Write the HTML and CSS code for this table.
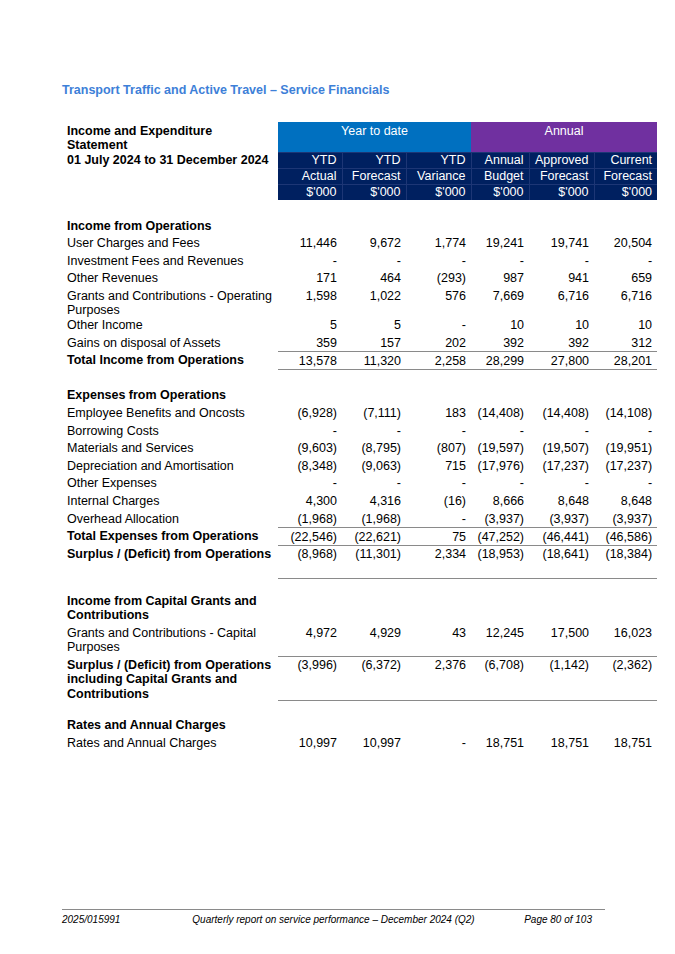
FILE: index.html
```html
<!DOCTYPE html>
<html lang="en">
<head>
<meta charset="utf-8">
<title>Transport Traffic and Active Travel – Service Financials</title>
<link rel="stylesheet" href="styles.css">
</head>
<body>
<div class="page">
  <h1 class="title">Transport Traffic and Active Travel – Service Financials</h1>

  <table class="fin">
    <colgroup>
      <col class="c-label">
      <col class="c-n1"><col class="c-n2"><col class="c-n3">
      <col class="c-n4"><col class="c-n5"><col class="c-n6">
    </colgroup>
    <thead>
      <tr class="h-group">
        <th class="lbl b">Income and Expenditure<br>Statement</th>
        <th class="grp ytd" colspan="3">Year to date</th>
        <th class="grp ann" colspan="3">Annual</th>
      </tr>
      <tr class="h-sub">
        <th class="lbl b">01 July 2024 to 31 December 2024</th>
        <th class="dk">YTD</th><th class="dk">YTD</th><th class="dk">YTD</th>
        <th class="dk">Annual</th><th class="dk">Approved</th><th class="dk">Current</th>
      </tr>
      <tr class="h-sub">
        <th class="lbl"></th>
        <th class="dk">Actual</th><th class="dk">Forecast</th><th class="dk">Variance</th>
        <th class="dk">Budget</th><th class="dk">Forecast</th><th class="dk">Forecast</th>
      </tr>
      <tr class="h-sub last">
        <th class="lbl"></th>
        <th class="dk">$'000</th><th class="dk">$'000</th><th class="dk">$'000</th>
        <th class="dk">$'000</th><th class="dk">$'000</th><th class="dk">$'000</th>
      </tr>
    </thead>
    <tbody>
      <tr class="blank"><td colspan="7"></td></tr>
      <tr><td class="lbl b" colspan="7">Income from Operations</td></tr>
      <tr><td class="lbl">User Charges and Fees</td><td>11,446</td><td>9,672</td><td>1,774</td><td>19,241</td><td>19,741</td><td>20,504</td></tr>
      <tr><td class="lbl">Investment Fees and Revenues</td><td>-</td><td>-</td><td>-</td><td>-</td><td>-</td><td>-</td></tr>
      <tr><td class="lbl">Other Revenues</td><td>171</td><td>464</td><td>(293)</td><td>987</td><td>941</td><td>659</td></tr>
      <tr class="tight"><td class="lbl">Grants and Contributions - Operating Purposes</td><td>1,598</td><td>1,022</td><td>576</td><td>7,669</td><td>6,716</td><td>6,716</td></tr>
      <tr><td class="lbl">Other Income</td><td>5</td><td>5</td><td>-</td><td>10</td><td>10</td><td>10</td></tr>
      <tr><td class="lbl">Gains on disposal of Assets</td><td>359</td><td>157</td><td>202</td><td>392</td><td>392</td><td>312</td></tr>
      <tr class="total both"><td class="lbl b">Total Income from Operations</td><td>13,578</td><td>11,320</td><td>2,258</td><td>28,299</td><td>27,800</td><td>28,201</td></tr>

      <tr class="blank"><td colspan="7"></td></tr>
      <tr><td class="lbl b" colspan="7">Expenses from Operations</td></tr>
      <tr><td class="lbl">Employee Benefits and Oncosts</td><td>(6,928)</td><td>(7,111)</td><td>183</td><td>(14,408)</td><td>(14,408)</td><td>(14,108)</td></tr>
      <tr><td class="lbl">Borrowing Costs</td><td>-</td><td>-</td><td>-</td><td>-</td><td>-</td><td>-</td></tr>
      <tr><td class="lbl">Materials and Services</td><td>(9,603)</td><td>(8,795)</td><td>(807)</td><td>(19,597)</td><td>(19,507)</td><td>(19,951)</td></tr>
      <tr><td class="lbl">Depreciation and Amortisation</td><td>(8,348)</td><td>(9,063)</td><td>715</td><td>(17,976)</td><td>(17,237)</td><td>(17,237)</td></tr>
      <tr><td class="lbl">Other Expenses</td><td>-</td><td>-</td><td>-</td><td>-</td><td>-</td><td>-</td></tr>
      <tr><td class="lbl">Internal Charges</td><td>4,300</td><td>4,316</td><td>(16)</td><td>8,666</td><td>8,648</td><td>8,648</td></tr>
      <tr><td class="lbl">Overhead Allocation</td><td>(1,968)</td><td>(1,968)</td><td>-</td><td>(3,937)</td><td>(3,937)</td><td>(3,937)</td></tr>
      <tr class="total top"><td class="lbl b">Total Expenses from Operations</td><td>(22,546)</td><td>(22,621)</td><td>75</td><td>(47,252)</td><td>(46,441)</td><td>(46,586)</td></tr>
      <tr class="total top"><td class="lbl b">Surplus / (Deficit) from Operations</td><td>(8,968)</td><td>(11,301)</td><td>2,334</td><td>(18,953)</td><td>(18,641)</td><td>(18,384)</td></tr>
      <tr class="spacer-a ruled"><td class="lbl"></td><td></td><td></td><td></td><td></td><td></td><td></td></tr>

      <tr class="spacer-b"><td colspan="7"></td></tr>
      <tr class="loose"><td class="lbl b" colspan="7">Income from Capital Grants and<br>Contributions</td></tr>
      <tr class="loose"><td class="lbl">Grants and Contributions - Capital<br>Purposes</td><td>4,972</td><td>4,929</td><td>43</td><td>12,245</td><td>17,500</td><td>16,023</td></tr>
      <tr class="total both"><td class="lbl b">Surplus / (Deficit) from Operations<br>including Capital Grants and<br>Contributions</td><td>(3,996)</td><td>(6,372)</td><td>2,376</td><td>(6,708)</td><td>(1,142)</td><td>(2,362)</td></tr>

      <tr class="spacer-c"><td colspan="7"></td></tr>
      <tr><td class="lbl b" colspan="7">Rates and Annual Charges</td></tr>
      <tr><td class="lbl">Rates and Annual Charges</td><td>10,997</td><td>10,997</td><td>-</td><td>18,751</td><td>18,751</td><td>18,751</td></tr>
    </tbody>
  </table>

  <footer class="foot">
    <span class="f-left">2025/015991</span>
    <span class="f-mid">Quarterly report on service performance – December 2024 (Q2)</span>
    <span class="f-right">Page 80 of 103</span>
  </footer>
</div>
</body>
</html>
```
FILE: styles.css
```css
* { box-sizing: border-box; }

html, body {
  margin: 0;
  padding: 0;
  background: #ffffff;
}

body {
  font-family: "Liberation Sans", Arial, sans-serif;
  color: #000000;
  font-size: 12.5px;
}

.page {
  width: 675px;
  min-height: 954px;
  padding: 83px 0 0 62px;
  display: flex;
  flex-direction: column;
}

.title {
  margin: 0 0 24px;
  font-size: 12.5px;
  line-height: 15px;
  font-weight: bold;
  color: #3d80d8;
}

.fin {
  border-collapse: collapse;
  table-layout: fixed;
  width: 595px;
}

.c-label { width: 216px; }
.c-n1 { width: 64px; }
.c-n2 { width: 64px; }
.c-n3 { width: 65px; }
.c-n4 { width: 58px; }
.c-n5 { width: 65px; }
.c-n6 { width: 63px; }

.fin th,
.fin td {
  padding: 1.5px 5px 0 0;
  line-height: 14.3px;
  vertical-align: top;
  text-align: right;
  font-weight: normal;
  white-space: nowrap;
}

.fin .lbl {
  text-align: left;
  padding-left: 5px;
  padding-right: 0;
  white-space: normal;
}

.fin .b { font-weight: bold; }

.h-group { height: 29px; }

.fin .h-sub th {
  padding-top: 0.5px;
}
.h-sub { height: 16px; }
.h-sub.last { height: 15.5px; }

.fin .grp {
  color: #ffffff;
  text-align: center;
  padding-right: 0;
}
.fin .ytd { background: #0070c0; }
.fin .ann { background: #7030a0; }

.fin .dk {
  background: #002060;
  color: #ffffff;
  border-left: 1px solid #1d3675;
  border-top: 1px solid #1d3675;
}
.fin .dk:nth-child(2) { border-left: none; }

.fin tbody tr { height: 17.6px; }
.fin tbody tr.blank { height: 17.6px; }
.fin tbody tr.spacer-a { height: 15.6px; }
.fin tbody tr.spacer-b { height: 14px; }
.fin tbody tr.spacer-c { height: 15.6px; }

.fin tr.tight td {
  padding-top: 1px;
  line-height: 14px;
}

.fin tr.loose td {
  line-height: 14.5px;
  padding-bottom: 1.5px;
}

.fin tr.total.both td:not(.lbl) {
  border-top: 1px solid #8a8a8a;
  border-bottom: 1px solid #8a8a8a;
}
.fin tr.total.top td:not(.lbl) {
  border-top: 1px solid #8a8a8a;
}
.fin tr.ruled td:not(.lbl) {
  border-bottom: 1px solid #8a8a8a;
}

.foot {
  margin-top: auto;
  margin-bottom: 28px;
  width: 543px;
  border-top: 1px solid #8a8a8a;
  padding-top: 4px;
  display: grid;
  grid-template-columns: 1fr auto 1fr;
  font-size: 10px;
  line-height: 12px;
  font-style: italic;
}
.f-left { text-align: left; }
.f-mid { text-align: center; }
.f-right { text-align: right; padding-right: 13px; }
```
